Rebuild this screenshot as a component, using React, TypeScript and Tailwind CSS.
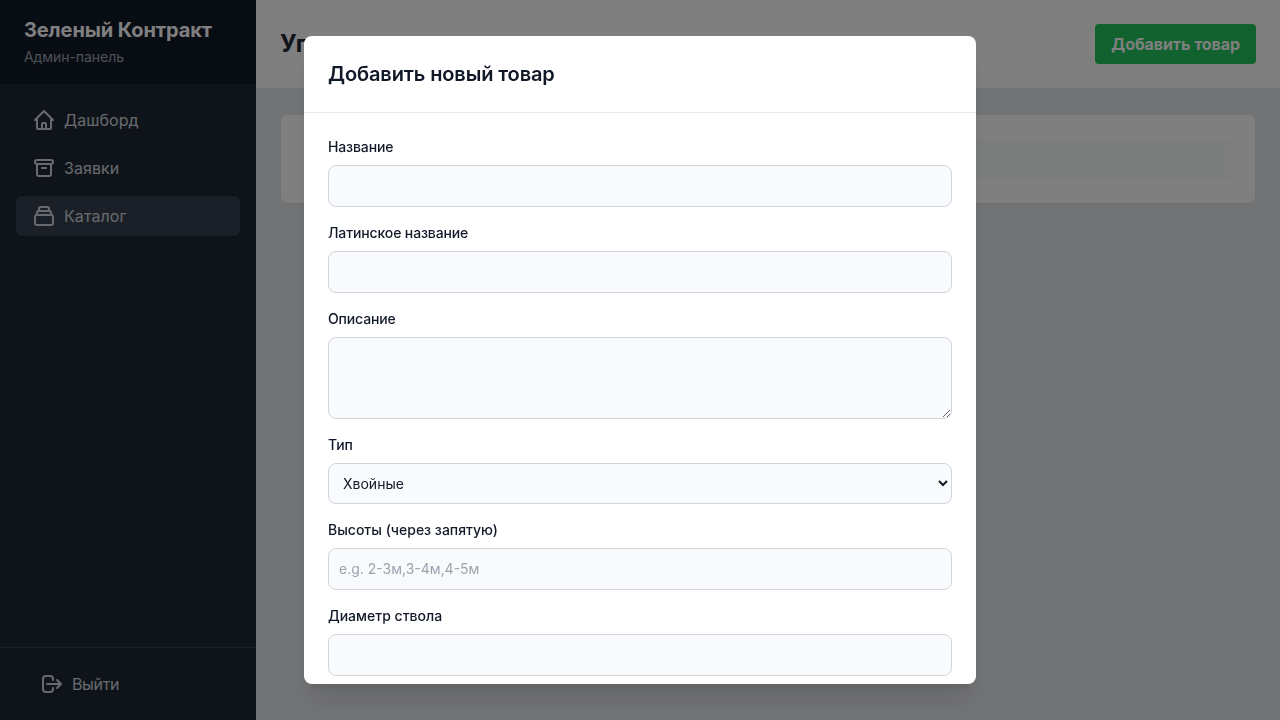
import type { ReactNode } from 'react';
import { HiOutlineArchive, HiOutlineCollection, HiOutlineHome, HiOutlineLogout } from 'react-icons/hi';

function NavItem({ icon, label, active }: { icon: ReactNode; label: string; active?: boolean }) {
  return (
    <a
      className={
        active
          ? 'flex items-center gap-2 rounded-md bg-[#374151] px-4 py-2 text-[#d1d5db]'
          : 'flex items-center gap-2 rounded-md px-4 py-2 text-[#d1d5db]'
      }
    >
      {icon}
      <span className="tracking-[0.08px]">{label}</span>
    </a>
  );
}

function Sidebar() {
  return (
    <aside className="flex w-64 shrink-0 flex-col bg-[#1f2937] text-white">
      <div className="bg-[#111827] px-6 pt-4 pb-[17px]">
        <h1 className="text-xl font-bold tracking-[-0.1px]">Зеленый Контракт</h1>
        <p className="mt-[3px] text-sm tracking-[-0.06px] text-[#9ca3af]">Админ-панель</p>
      </div>
      <nav className="flex flex-1 flex-col gap-2 p-4">
        <NavItem icon={<HiOutlineHome className="size-6" />} label="Дашборд" />
        <NavItem icon={<HiOutlineArchive className="size-6" />} label="Заявки" />
        <NavItem icon={<HiOutlineCollection className="size-6" />} label="Каталог" active />
      </nav>
      <div className="border-t border-[#374151] p-4">
        <button className="flex w-full items-center gap-2 px-6 py-2 text-[#d1d5db]">
          <HiOutlineLogout className="size-6" />
          <span className="tracking-[-0.35px]">Выйти</span>
        </button>
      </div>
    </aside>
  );
}

const control =
  'block w-full rounded-lg border border-[#d1d5db] bg-[#f9fafb] p-2.5 text-sm text-[#111827] outline-none placeholder:text-[#9ca3af]';

function Field({ label, tight, children }: { label: string; tight?: boolean; children: ReactNode }) {
  return (
    <label className="block">
      <span
        className={
          tight
            ? 'mb-2 block text-sm font-medium tracking-[-0.13px] text-[#111827]'
            : 'mb-2 block text-sm font-medium text-[#111827]'
        }
      >
        {label}
      </span>
      {children}
    </label>
  );
}

function ProductModal() {
  return (
    <div className="fixed inset-0 z-50 flex items-center justify-center bg-black/50">
      <div className="flex h-[90vh] w-full max-w-2xl flex-col overflow-hidden rounded-lg bg-white shadow-xl">
        <div className="shrink-0 border-b border-[#e5e7eb] p-6">
          <h2 className="text-xl font-semibold tracking-[-0.12px] text-[#111827]">Добавить новый товар</h2>
        </div>
        <form className="flex min-h-0 flex-1 flex-col gap-4 overflow-hidden p-6">
          <Field label="Название" tight>
            <input type="text" className={control} />
          </Field>
          <Field label="Латинское название" tight>
            <input type="text" className={control} />
          </Field>
          <Field label="Описание" tight>
            <textarea rows={3} className={control} />
          </Field>
          <Field label="Тип" tight>
            <select className={control}>
              <option>Хвойные</option>
              <option>Лиственные</option>
            </select>
          </Field>
          <Field label="Высоты (через запятую)">
            <input type="text" placeholder="e.g. 2-3м,3-4м,4-5м" className={control} />
          </Field>
          <Field label="Диаметр ствола">
            <input type="text" className={control} />
          </Field>
        </form>
      </div>
    </div>
  );
}

export default function App() {
  return (
    <div className="flex h-screen overflow-hidden bg-[#e5e7eb] font-[Inter,sans-serif]">
      <Sidebar />
      <main className="flex min-w-0 flex-1 flex-col">
        <header className="flex items-center justify-between bg-white p-6">
          <h2 className="text-2xl font-bold text-[#1f2937]">Управление каталогом</h2>
          <button className="rounded bg-[#22c55e] px-4 py-2 font-bold tracking-[-0.07px] text-white">Добавить товар</button>
        </header>
        <section className="mx-[25px] mt-[27px] rounded-md bg-white p-6 shadow-xs">
          <div className="h-10 bg-[#f7fcf9]" />
        </section>
      </main>
      <ProductModal />
    </div>
  );
}
